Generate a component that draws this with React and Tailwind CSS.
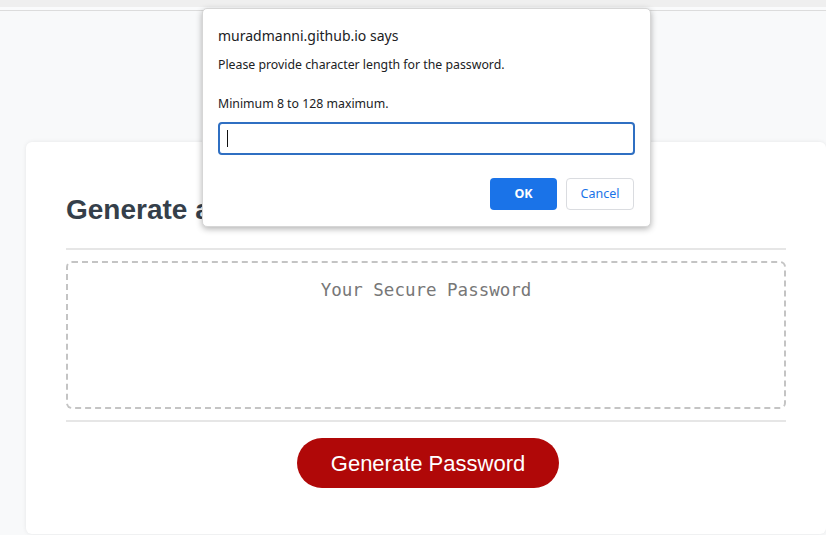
export default function App() {
  return (
    <div className="relative w-[826px] h-[535px] overflow-hidden bg-[#f8f9fa] font-['Liberation_Sans',Arial,sans-serif]">
      <div className="h-[7px] bg-[#efefef]" />
      <div className="h-[4px] bg-[#fafbfc] border-b border-[#dcdcdc]" />

      <div className="pt-[131px] pl-[26px]">
        <div className="w-[800px] h-[392px] bg-white rounded-[6px] shadow-[0_0_4px_rgba(0,0,0,0.08)] px-[40px] pt-[51px]">
          <h2 className="text-[28px] leading-[34px] font-bold text-[#353f4a]">Generate a Password</h2>
          <div className="mt-[21px] h-[2px] bg-[#e6e6e6]" />
          <div className="mt-[11px] h-[148px] border-2 border-dashed border-[#c4c4c4] rounded-[6px] pt-[14px] text-center">
            <span className="font-['DejaVu_Sans_Mono',monospace] text-[17.5px] text-[#777]">Your Secure Password</span>
          </div>
          <div className="mt-[11px] h-[2px] bg-[#e6e6e6]" />
          <div className="flex justify-center mt-[16px] pl-[4px]">
            <button className="w-[262px] h-[50px] rounded-full bg-[#b00808] text-white text-[22px]">Generate Password</button>
          </div>
        </div>
      </div>

      <div className="absolute left-[202px] top-[8px] w-[449px] h-[219px] bg-white rounded-[5px] border border-[#d6d6d6] shadow-[0_2px_6px_rgba(0,0,0,0.3)] font-['Noto_Sans','Open_Sans',sans-serif] px-[15px]">
        <div className="mt-[17px] text-[14px] leading-[20px] text-[#202124]">muradmanni.github.io says</div>
        <div className="mt-[9px] text-[12.3px] leading-[19px] text-[#202124]">Please provide character length for the password.</div>
        <div className="mt-[20px] text-[12.3px] leading-[19px] text-[#202124]">Minimum 8 to 128 maximum.</div>
        <div className="mt-[9px] h-[33px] w-[417px] border-2 border-[#2f6fc2] rounded-[4px] flex items-center pl-[7px]">
          <div className="w-px h-[17px] bg-[#111]" />
        </div>
        <div className="flex justify-end gap-[9px] mt-[23px] pr-[1px]">
          <button className="w-[67px] h-[32px] rounded-[4px] bg-[#1a73e8] text-white text-[12.5px] font-bold">OK</button>
          <button className="w-[68px] h-[32px] rounded-[4px] bg-white border border-[#dadce0] text-[#1a73e8] text-[12.5px]">Cancel</button>
        </div>
      </div>
    </div>
  );
}
